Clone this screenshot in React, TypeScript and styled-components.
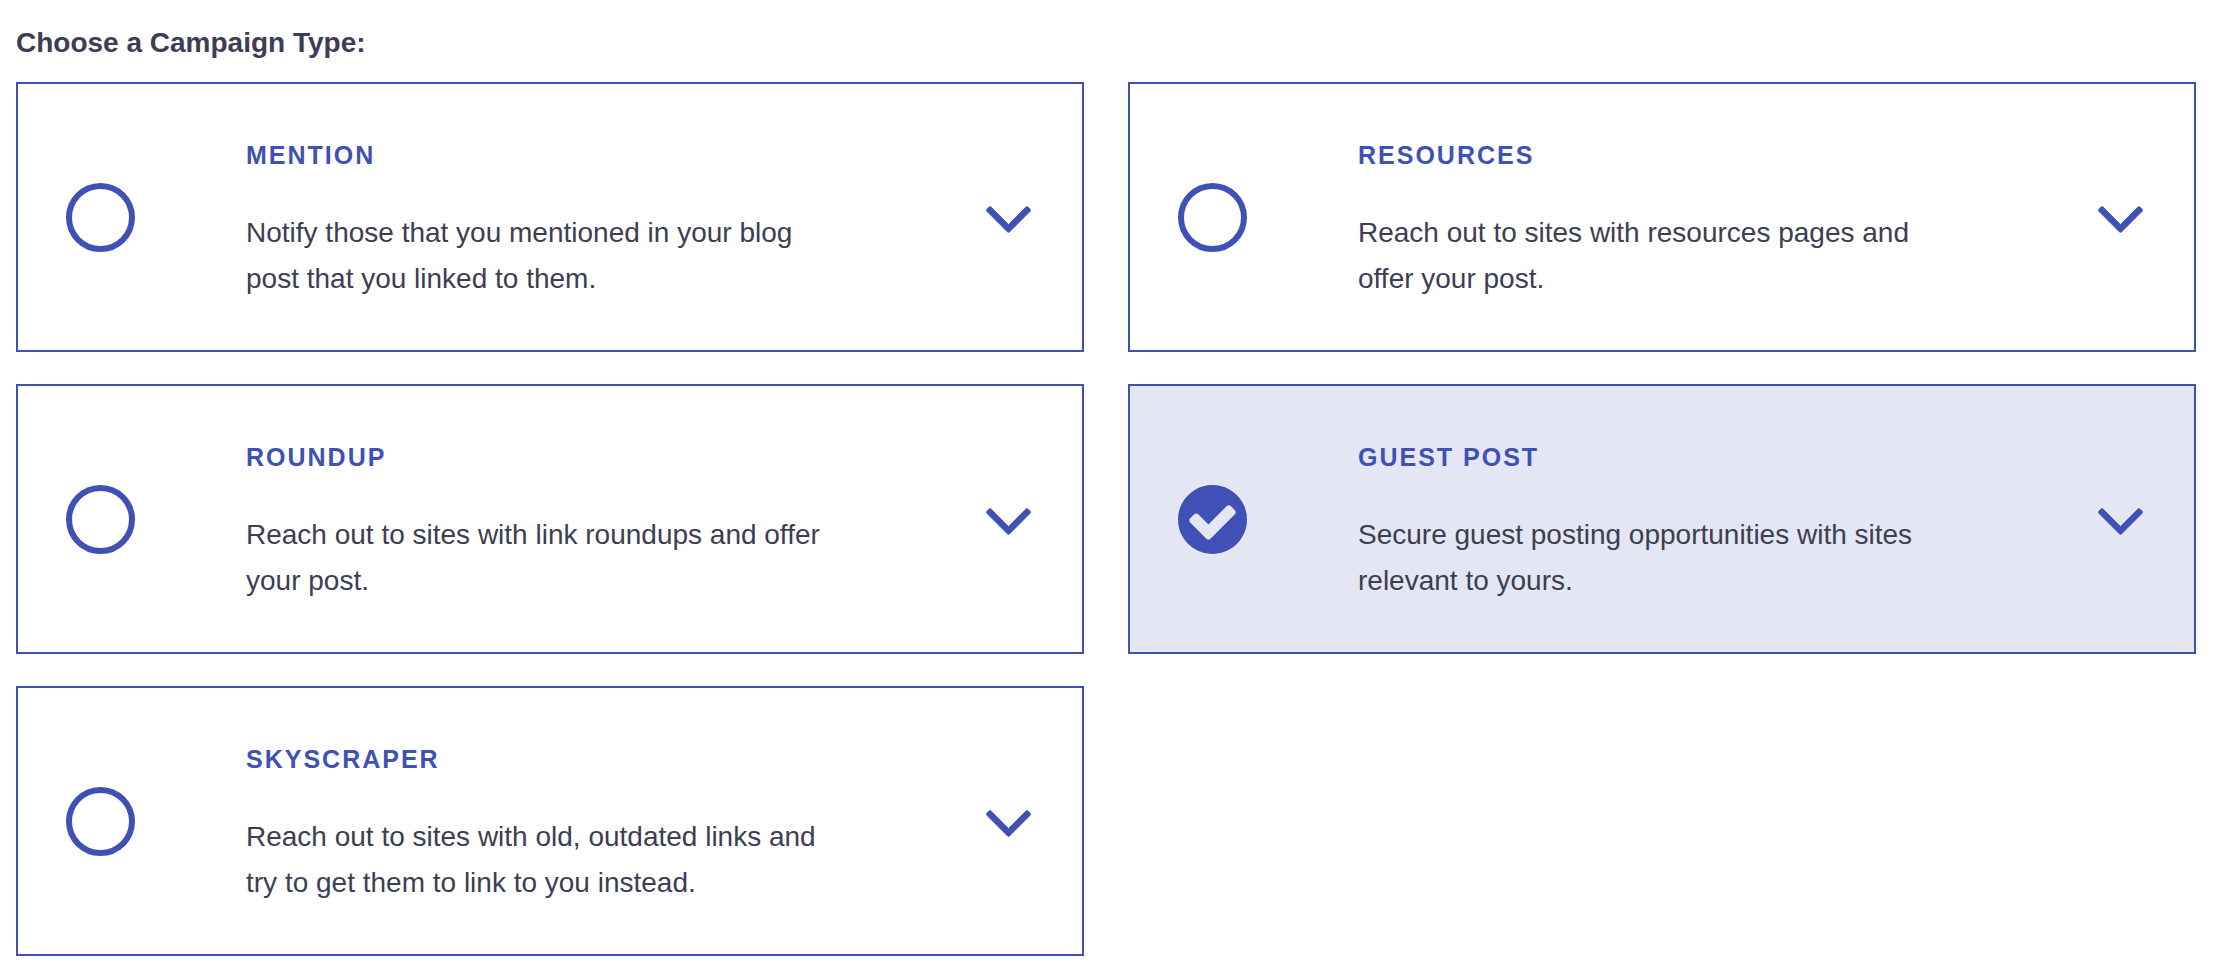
import React, { useState } from "react";
import styled, { createGlobalStyle } from "styled-components";

const colors = {
  accent: "#3f51b5",
  text: "#3d3d53",
  selected: "#e4e6f3",
  surface: "#ffffff",
};

const GlobalStyle = createGlobalStyle`
  *, *::before, *::after {
    box-sizing: border-box;
  }

  body {
    margin: 0;
    background: ${colors.surface};
    color: ${colors.text};
    font-family: "Liberation Sans", Arial, Helvetica, sans-serif;
    font-size: 28px;
    line-height: 46px;
  }
`;

const Fieldset = styled.fieldset`
  margin: 0;
  padding: 20px 20px 22px 16px;
  border: 0;
  min-width: 0;
`;

const Legend = styled.legend`
  float: left;
  width: 100%;
  margin-bottom: 16px;
  padding: 0;
  font-weight: 700;
`;

const Options = styled.div`
  clear: both;
  display: grid;
  grid-template-columns: repeat(2, minmax(0, 1fr));
  gap: 32px 44px;
`;

const Card = styled.div<{ $selected: boolean }>`
  display: grid;
  grid-template-columns: 228px minmax(0, 1fr) 236px;
  align-items: center;
  padding: 48px 0;
  border: 2px solid ${colors.accent};
  background: ${(p) => (p.$selected ? colors.selected : colors.surface)};
`;

const Marker = styled.div`
  display: grid;
  justify-content: start;
  padding-left: 48px;

  > * {
    grid-area: 1 / 1;
  }
`;

const Radio = styled.input`
  appearance: none;
  width: 69px;
  height: 69px;
  margin: 0;
  border: 6px solid ${colors.accent};
  border-radius: 50%;
  cursor: pointer;

  &:checked {
    border-color: transparent;
  }
`;

const CheckMark = styled.svg`
  width: 69px;
  height: 69px;
  fill: ${colors.accent};
  pointer-events: none;
`;

const Body = styled.label`
  display: flex;
  flex-direction: column;
  gap: 32px;
  cursor: pointer;
`;

const Title = styled.span`
  color: ${colors.accent};
  font-size: 25px;
  font-weight: 700;
  letter-spacing: 2px;
  text-transform: uppercase;
`;

const Description = styled.span``;

const Toggle = styled.button`
  justify-self: end;
  display: flex;
  margin-right: 43px;
  padding: 12px 8px 7px;
  border: 0;
  background: none;
  cursor: pointer;
`;

const Chevron = styled.svg`
  width: 45px;
  height: 27px;
  fill: ${colors.accent};
  stroke: ${colors.accent};
  stroke-width: 18;
`;

const campaigns = [
  {
    id: "mention",
    title: "Mention",
    description:
      "Notify those that you mentioned in your blog post that you linked to them.",
  },
  {
    id: "resources",
    title: "Resources",
    description: "Reach out to sites with resources pages and offer your post.",
  },
  {
    id: "roundup",
    title: "Roundup",
    description: "Reach out to sites with link roundups and offer your post.",
  },
  {
    id: "guest-post",
    title: "Guest Post",
    description:
      "Secure guest posting opportunities with sites relevant to yours.",
  },
  {
    id: "skyscraper",
    title: "Skyscraper",
    description:
      "Reach out to sites with old, outdated links and try to get them to link to you instead.",
  },
];

export default function App() {
  const [selected, setSelected] = useState("guest-post");

  return (
    <>
      <GlobalStyle />
      <Fieldset>
        <Legend>Choose a Campaign Type:</Legend>
        <Options>
          {campaigns.map(({ id, title, description }) => (
            <Card key={id} $selected={id === selected}>
              <Marker>
                <Radio
                  type="radio"
                  name="campaign"
                  id={id}
                  value={id}
                  checked={id === selected}
                  onChange={() => setSelected(id)}
                />
                {id === selected && (
                  <CheckMark viewBox="0 0 1536 1536" aria-hidden="true">
                    <path d="M1284 606q0-28-18-46l-91-90q-19-19-45-19t-45 19L677 877 451 651q-19-19-45-19t-45 19l-91 90q-18 18-18 46 0 27 18 45l362 362q19 19 45 19 27 0 46-19l543-543q18-18 18-45zm252 162q0 209-103 385.5T1153.5 1433 768 1536t-385.5-103T103 1153.5 0 768t103-385.5T382.5 103 768 0t385.5 103T1433 382.5 1536 768z" />
                  </CheckMark>
                )}
              </Marker>
              <Body htmlFor={id}>
                <Title>{title}</Title>
                <Description>{description}</Description>
              </Body>
              <Toggle type="button" aria-label={`More about ${title}`}>
                <Chevron viewBox="68 644 1016 600" aria-hidden="true">
                  <path d="M1075 736q0 13-10 23l-466 466q-10 10-23 10t-23-10L87 759q-10-10-10-23t10-23l50-50q10-10 23-10t23 10l393 393 393-393q10-10 23-10t23 10l50 50q10 10 10 23z" />
                </Chevron>
              </Toggle>
            </Card>
          ))}
        </Options>
      </Fieldset>
    </>
  );
}
